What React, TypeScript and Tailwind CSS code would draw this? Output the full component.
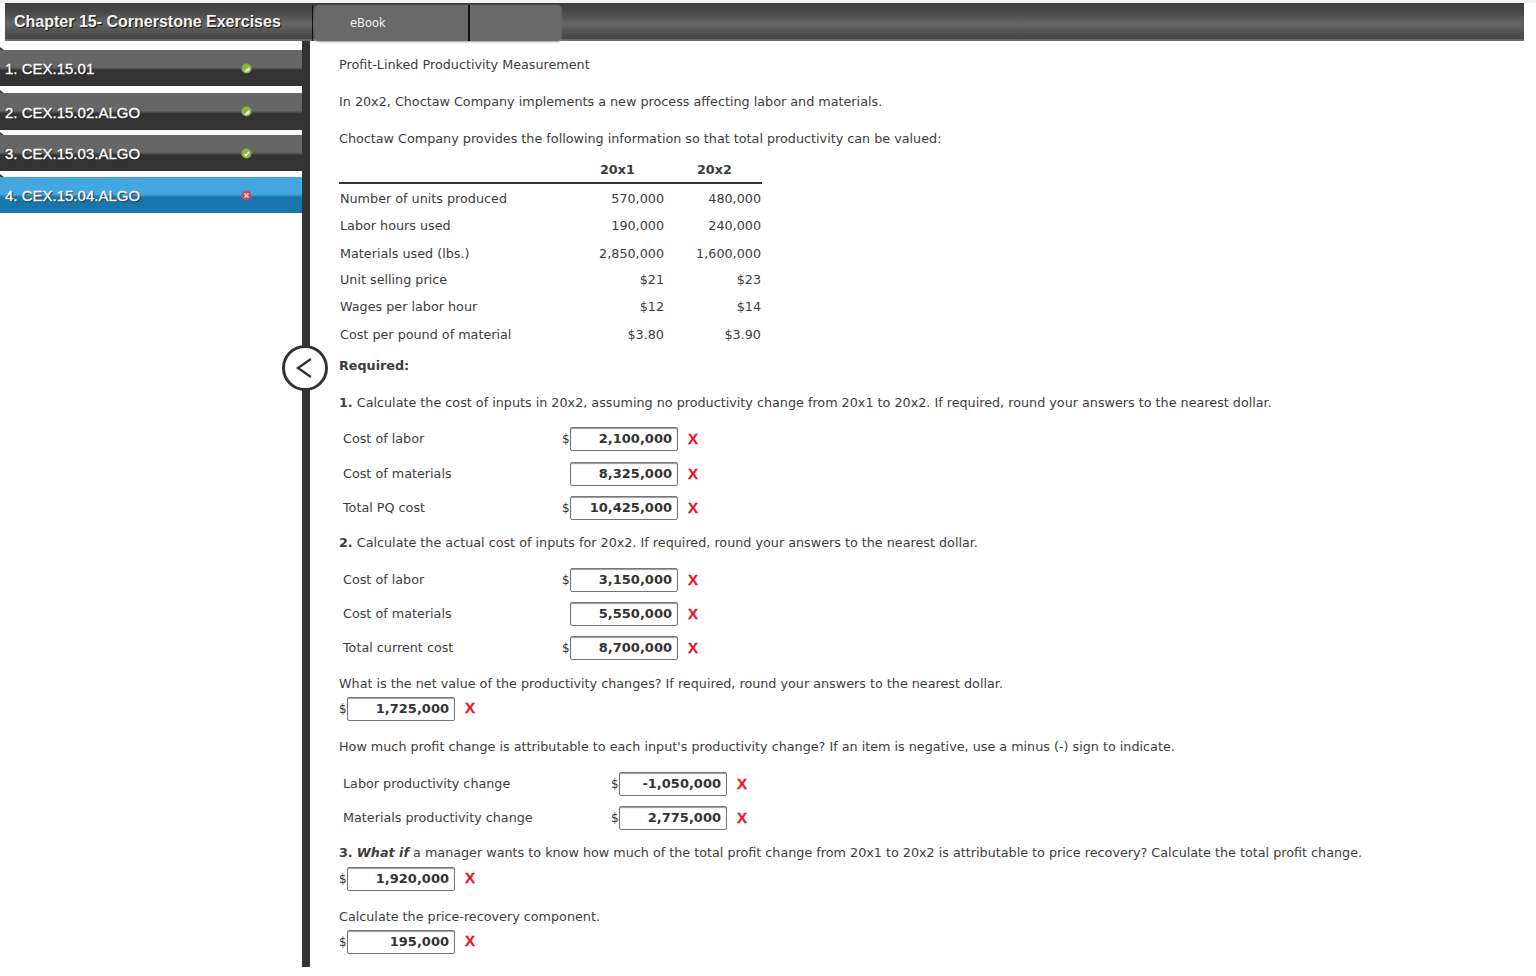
import React from "react";

const Dot = ({ kind }: { kind: "half" | "check" | "x" }) => (
  <svg width="11" height="11" viewBox="0 0 11 11" className="ml-auto mr-[50px]">
    <circle cx="5.5" cy="5.5" r="5" fill={kind === "x" ? "#c94a6a" : "#8fb33f"} />
    {kind === "half" && <path d="M3 8.5 8.5 3.5 8.5 7.5 5.5 9Z" fill="#e8e8e8" />}
    {kind === "check" && <path d="M3.5 6 5 7.5 8 4" stroke="#fff" strokeWidth="1.6" fill="none" />}
    {kind === "x" && <path d="M3.5 3.5 7.5 7.5M7.5 3.5 3.5 7.5" stroke="#f4d4dc" strokeWidth="1.6" />}
  </svg>
);

const Item = ({ label, kind, active, cls }: { label: string; kind: "half" | "check" | "x"; active?: boolean; cls: string }) => (
  <div
    className={`relative flex items-center pl-[5px] text-[15px] text-white font-['Liberation_Sans',sans-serif] [-webkit-text-stroke:0.3px_#fff] [text-shadow:1px_1px_1px_#222] ${cls} ${
      active
        ? "bg-[linear-gradient(#45a7e1_0%,#45a7e1_48%,#1976ad_56%,#1976ad_100%)]"
        : "bg-[linear-gradient(#666_0%,#666_48%,#333_56%,#333_100%)]"
    }`}
  >
    <span className="absolute left-0 -top-[3px] h-0 w-0 border-b-[3px] border-r-[4px] border-b-[#444] border-r-transparent" />
    <span className="mt-[2px]">{label}</span>
    <Dot kind={kind} />
  </div>
);

const Money = ({ value, dollar = true }: { value: string; dollar?: boolean }) => (
  <div className="flex items-center">
    <span className="w-[8px] text-[12px] leading-none text-[#333]">{dollar ? "$" : ""}</span>
    <div className="flex h-[24px] w-[108px] items-center justify-end rounded-[2px] border border-[#777] bg-white pr-[5px] text-[13px] font-bold text-[#333] shadow-[inset_0_1px_1px_#999]">
      {value}
    </div>
    <span className="ml-[10px] -mt-[2px] font-['Liberation_Sans',sans-serif] text-[15px] font-bold leading-none text-[#e8141e] [-webkit-text-stroke:0.3px_#e8141e]">X</span>
  </div>
);

const FormRow = ({ label, value, dollar, cls, wide }: { label: string; value: string; dollar?: boolean; cls: string; wide?: boolean }) => (
  <div className={`flex items-center pl-[4px] ${cls}`}>
    <span className={wide ? "w-[268px]" : "w-[219px]"}>{label}</span>
    <Money value={value} dollar={dollar} />
  </div>
);

const rows = [
  ["Number of units produced", "570,000", "480,000", "h-[27px]"],
  ["Labor hours used", "190,000", "240,000", "h-[27px]"],
  ["Materials used (lbs.)", "2,850,000", "1,600,000", "h-[29px]"],
  ["Unit selling price", "$21", "$23", "h-[24px]"],
  ["Wages per labor hour", "$12", "$14", "h-[29px]"],
  ["Cost per pound of material", "$3.80", "$3.90", "h-[27px]"],
];

export default function App() {
  return (
    <div className="relative flex h-[976px] w-[1536px] flex-col overflow-hidden bg-white font-['DejaVu_Sans',sans-serif] text-[12.75px] leading-[20px] text-[#3c3c3c]">
      <div className="h-[3px] shrink-0 bg-[#f2f2f2]" />
      <header className="ml-[5px] mr-[12px] flex h-[38px] shrink-0 bg-[linear-gradient(#3c3c3c_0%,#4a4a4a_25%,#666_55%,#4e4e4e_80%,#474747_94%,#6a6a6a_95%,#6a6a6a_100%)]">
        <div className="flex w-[307px] items-center pl-[9px] font-['Liberation_Sans',sans-serif] text-[16px] font-bold text-[#f2f2f2] [text-shadow:1px_1px_1px_#111]">
          Chapter 15- Cornerstone Exercises
        </div>
        <div className="mt-[2px] w-px bg-[#111]" />
        <div className="ml-[2px] mt-[2px] flex h-[36px] w-[246px] rounded-[4px] bg-[#696969] shadow-[0_1px_2px_#999]">
          <div className="flex w-[155px] items-center border-r-2 border-[#111] pl-[35px] text-[11.5px] text-[#f0f0f0]">eBook</div>
        </div>
      </header>

      <div className="flex h-[926px] shrink-0">
        <nav className="flex w-[302px] shrink-0 flex-col pt-[9px]">
          <Item label="1. CEX.15.01" kind="half" cls="h-[36px]" />
          <Item label="2. CEX.15.02.ALGO" kind="half" cls="mt-[7px] h-[37px]" />
          <Item label="3. CEX.15.03.ALGO" kind="check" cls="mt-[5px] h-[36px]" />
          <Item label="4. CEX.15.04.ALGO" kind="x" active cls="mt-[6px] h-[36px]" />
        </nav>
        <div className="w-[8px] shrink-0 bg-[#333]" />
        <main className="flex-1 pl-[29px] pt-[14px]">
          <p>Profit-Linked Productivity Measurement</p>
          <p className="mt-[17px]">In 20x2, Choctaw Company implements a new process affecting labor and materials.</p>
          <p className="mt-[17px]">Choctaw Company provides the following information so that total productivity can be valued:</p>

          <div className="mt-[14px] w-[423px]">
            <div className="flex h-[21px] items-center border-b-2 border-[#333] pb-[6px] font-bold">
              <span className="w-[261px]" />
              <span className="w-[34px]">20x1</span>
              <span className="ml-[63px] w-[34px]">20x2</span>
            </div>
            <div className="h-[1px]" />
            {rows.map(([a, b, c, h]) => (
              <div key={a} className={`flex items-center ${h}`}>
                <span className="w-[225px] pl-px">{a}</span>
                <span className="w-[100px] text-right">{b}</span>
                <span className="w-[97px] text-right">{c}</span>
              </div>
            ))}
          </div>

          <p className="mt-[8px] font-bold">Required:</p>
          <p className="mt-[17px]"><b>1.</b> Calculate the cost of inputs in 20x2, assuming no productivity change from 20x1 to 20x2. If required, round your answers to the nearest dollar.</p>

          <FormRow label="Cost of labor" value="2,100,000" cls="mt-[13px] h-[26px]" />
          <FormRow label="Cost of materials" value="8,325,000" dollar={false} cls="mt-[9px] h-[26px]" />
          <FormRow label="Total PQ cost" value="10,425,000" cls="mt-[8px] h-[26px]" />

          <p className="mt-[12px]"><b>2.</b> Calculate the actual cost of inputs for 20x2. If required, round your answers to the nearest dollar.</p>

          <FormRow label="Cost of labor" value="3,150,000" cls="mt-[14px] h-[26px]" />
          <FormRow label="Cost of materials" value="5,550,000" dollar={false} cls="mt-[8px] h-[26px]" />
          <FormRow label="Total current cost" value="8,700,000" cls="mt-[8px] h-[26px]" />

          <p className="mt-[13px]">What is the net value of the productivity changes? If required, round your answers to the nearest dollar.</p>
          <div className="mt-[2px] h-[25px] flex items-center"><Money value="1,725,000" /></div>

          <p className="mt-[16px]">How much profit change is attributable to each input's productivity change? If an item is negative, use a minus (-) sign to indicate.</p>
          <FormRow label="Labor productivity change" value="-1,050,000" wide cls="mt-[14px] h-[26px]" />
          <FormRow label="Materials productivity change" value="2,775,000" wide cls="mt-[8px] h-[26px]" />

          <p className="mt-[12px]"><b>3.</b> <b><i>What if</i></b> a manager wants to know how much of the total profit change from 20x1 to 20x2 is attributable to price recovery? Calculate the total profit change.</p>
          <div className="mt-[3px] h-[25px] flex items-center"><Money value="1,920,000" /></div>

          <p className="mt-[16px]">Calculate the price-recovery component.</p>
          <div className="mt-[2px] h-[25px] flex items-center"><Money value="195,000" /></div>
        </main>
      </div>

      <div className="absolute left-[282px] top-[345px] flex h-[46px] w-[46px] items-center justify-center rounded-full border-[3px] border-[#333] bg-white">
        <svg width="20" height="24" viewBox="0 0 20 24" fill="none">
          <path d="M16 3 3 12l13 9" stroke="#333" strokeWidth="2.4" />
        </svg>
      </div>
    </div>
  );
}
